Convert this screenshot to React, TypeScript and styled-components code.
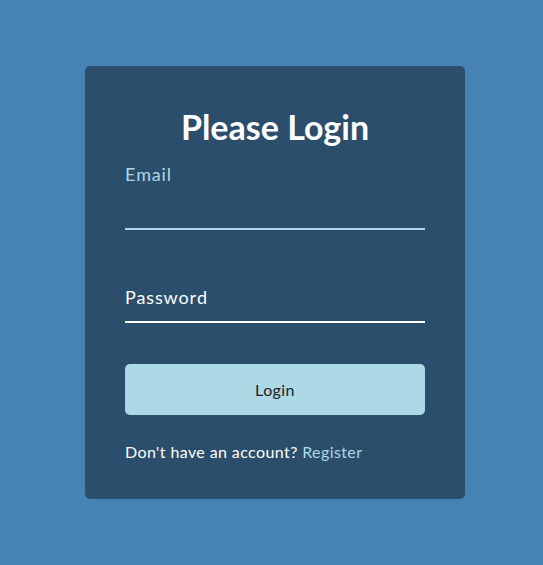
import React, { useState } from "react";
import styled, { createGlobalStyle } from "styled-components";

const GlobalStyle = createGlobalStyle`
    * {
        box-sizing: border-box;
    }

    body {
        margin: 0;
        padding-left: 7px;
        height: 100vh;
        overflow: hidden;
        background-color: steelblue;
        color: #fff;
        font-family: Lato, "Noto Sans", sans-serif;
        letter-spacing: 0.4px;
        display: flex;
        flex-direction: column;
        align-items: center;
        justify-content: center;
    }
`;

type FieldProps = {
    label: string;
    type: string;
    focused: boolean;
};

const Field: React.FunctionComponent<FieldProps> = ({ label, type, focused }) => {
    const [value, setValue] = useState("");
    const raised = focused || value.length > 0;

    return (
        <FormControl>
            <Input type={type} value={value} onChange={e => setValue(e.target.value)} active={focused} required />
            <Label>
                {label.split("").map((letter, idx) => (
                    <Letter key={idx} raised={raised}>
                        {letter}
                    </Letter>
                ))}
            </Label>
        </FormControl>
    );
};

export default function App() {
    return (
        <>
            <GlobalStyle />
            <Container>
                <Title>Please Login</Title>
                <form onSubmit={e => e.preventDefault()}>
                    <Field label="Email" type="text" focused />
                    <Field label="Password" type="password" focused={false} />
                    <Button type="submit">Login</Button>
                    <Footer>
                        Don't have an account? <Link href="#">Register</Link>
                    </Footer>
                </form>
            </Container>
        </>
    );
}

const Container = styled.div`
    background-color: rgba(0, 0, 0, 0.4);
    padding: 20px 40px;
    border-radius: 5px;
    width: 380px;
`;

const Title = styled.h1`
    text-align: center;
    font-size: 34px;
    font-weight: 700;
    letter-spacing: 0;
    margin: 22px 0 33px;
    line-height: 1.1;
`;

const FormControl = styled.div`
    position: relative;
    margin: 20px 0 41px;
    width: 300px;
`;

const Input = styled.input<{ active: boolean }>`
    background-color: transparent;
    border: 0;
    border-bottom: 2px solid ${props => (props.active ? "lightblue" : "#fff")};
    display: block;
    width: 100%;
    padding: 15px 0;
    font-size: 18px;
    line-height: 20px;
    font-family: inherit;
    color: #fff;
    outline: none;
`;

const Label = styled.label`
    position: absolute;
    top: 15px;
    left: 0;
    pointer-events: none;
`;

const Letter = styled.span<{ raised: boolean }>`
    display: inline-block;
    font-size: 18px;
    min-width: 5px;
    letter-spacing: 0.8px;
    color: ${props => (props.raised ? "lightblue" : "#fff")};
    transform: translateY(${props => (props.raised ? "-30px" : "0")});
    transition: 0.3s cubic-bezier(0.68, -0.55, 0.265, 1.55);
`;

const Button = styled.button`
    cursor: pointer;
    display: inline-block;
    width: 100%;
    background: lightblue;
    padding: 15px;
    font-family: inherit;
    font-size: 16px;
    line-height: 21px;
    letter-spacing: 0.4px;
    color: #222;
    border: 0;
    border-radius: 5px;
`;

const Footer = styled.p`
    margin: 27px 0 18px;
    font-size: 16px;
`;

const Link = styled.a`
    text-decoration: none;
    color: lightblue;
`;
